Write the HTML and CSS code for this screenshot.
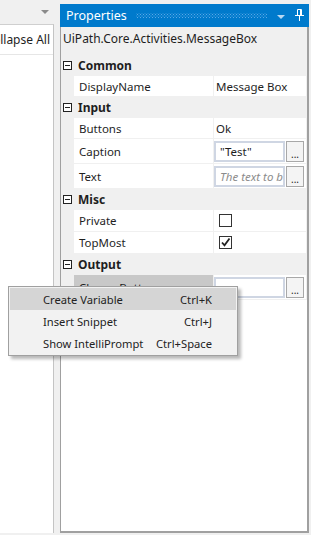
FILE: index.html
```html
<!DOCTYPE html>
<html lang="en">
<head>
  <meta charset="UTF-8" />
  <meta name="viewport" content="width=device-width, initial-scale=1.0"/>
  <title>Properties</title>
  <link rel="stylesheet" href="styles.css">
</head>
<body>
  <div class="workspace">
    <!-- left pane, mostly cut off -->
    <div class="side">
      <div class="side-head">
        <span class="side-arrow"></span>
      </div>
      <div class="side-body">
        <div class="side-tool"><span>Collapse All</span></div>
      </div>
    </div>

    <!-- properties pane -->
    <div class="props">
      <div class="props-title">
        <span class="title-text">Properties</span>
        <span class="title-grip"></span>
        <span class="title-arrow"></span>
        <svg class="title-pin" width="9" height="12" viewBox="0 0 9 12">
          <path d="M2.5 0.5h4v6h-4z M0 6.5h9 M4.5 7v5" fill="none" stroke="#fff" stroke-width="1"/>
          <path d="M5 1v5.5h1.5V1z" fill="#fff"/>
        </svg>
      </div>
      <div class="props-body">
        <div class="props-type">UiPath.Core.Activities.MessageBox</div>
        <div class="grid">
          <div class="cat"><span class="toggle"></span><span class="cat-name">Common</span></div>
          <div class="row">
            <span class="name">DisplayName</span>
            <span class="value">Message Box</span>
          </div>

          <div class="cat"><span class="toggle"></span><span class="cat-name">Input</span></div>
          <div class="row">
            <span class="name">Buttons</span>
            <span class="value">Ok</span>
          </div>
          <div class="row tall">
            <span class="name">Caption</span>
            <span class="value edit"><span class="box">"Test"</span><span class="dots">...</span></span>
          </div>
          <div class="row tall">
            <span class="name">Text</span>
            <span class="value edit"><span class="box hint">The text to be displayed</span><span class="dots">...</span></span>
          </div>

          <div class="cat"><span class="toggle"></span><span class="cat-name">Misc</span></div>
          <div class="row mid">
            <span class="name">Private</span>
            <span class="value"><span class="check"></span></span>
          </div>
          <div class="row mid">
            <span class="name">TopMost</span>
            <span class="value">
              <span class="check">
                <svg width="11" height="11" viewBox="0 0 11 11"><path d="M2 5.5l2.5 2.8L9.5 1.5" fill="none" stroke="#222" stroke-width="1.8"/></svg>
              </span>
            </span>
          </div>

          <div class="cat"><span class="toggle"></span><span class="cat-name">Output</span></div>
          <div class="row tall">
            <span class="name picked">ChooseButton</span>
            <span class="value edit"><span class="box"></span><span class="dots">...</span></span>
          </div>
        </div>
      </div>
    </div>
  </div>
  <div class="bottom-strip"></div>

  <!-- context menu over the grid -->
  <div class="menu">
    <div class="menu-item active"><span>Create Variable</span><span>Ctrl+K</span></div>
    <div class="menu-item"><span>Insert Snippet</span><span>Ctrl+J</span></div>
    <div class="menu-item"><span>Show IntelliPrompt</span><span>Ctrl+Space</span></div>
  </div>
</body>
</html>
```

FILE: styles.css
```css
:root {
  --bg: #f0f0f0;
  --blue: #007acc;
  --line: #a0a0a0;
  --text: #1e1e1e;
}
html, body {
  margin: 0; padding: 0;
  background: var(--bg);
  color: var(--text);
  font-family: 'Noto Sans', 'Open Sans', Arial, sans-serif;
  font-size: 11.5px;
  height: 535px;
  overflow: hidden;
}
.workspace {
  display: flex;
  height: 533px;
}

/* left pane */
.side {
  width: 54px;
  display: flex;
  flex-direction: column;
}
.side-head {
  height: 24px;
  display: flex;
  justify-content: flex-end;
  align-items: center;
  padding-right: 5px;
}
.side-arrow {
  width: 0; height: 0;
  border-left: 4px solid transparent;
  border-right: 4px solid transparent;
  border-top: 4px solid #8a8a8a;
}
.side-body {
  flex: 1;
  background: #fff;
  border-top: 1px solid #cfcfcf;
  border-right: 1px solid #c4c4c4;
}
.side-tool {
  height: 29px;
  border-bottom: 1px solid #e6e6e6;
  display: flex;
  justify-content: flex-end;
  align-items: center;
  overflow: hidden;
  padding-right: 3px;
  white-space: nowrap;
  font-size: 12px;
}

/* properties pane */
.props {
  margin-left: 6px;
  width: 249px;
  display: flex;
  flex-direction: column;
  padding-top: 4px;
}
.props-title {
  height: 23px;
  background: var(--blue);
  color: #fff;
  display: flex;
  align-items: center;
  padding: 0 5px 0 6px;
  gap: 6px;
}
.title-text { font-size: 12.5px; }
.title-grip {
  flex: 1;
  height: 5px;
  margin: 0 4px 0 3px;
  background-image:
    radial-gradient(circle, #5aa8e6 0.7px, transparent 0.8px),
    radial-gradient(circle, #5aa8e6 0.7px, transparent 0.8px);
  background-size: 3px 3px;
  background-position: 0 0, 1.5px 1.5px;
}
.title-arrow {
  width: 0; height: 0;
  border-left: 4px solid transparent;
  border-right: 4px solid transparent;
  border-top: 4px solid #b8d8f2;
  margin: 2px 4px 0 0;
}
.title-pin { margin-bottom: 1px; }
.props-body {
  flex: 1;
  background: #fff;
  border-left: 1px solid var(--line);
  border-right: 2px solid var(--line);
  border-bottom: 2px solid var(--line);
  display: flex;
  flex-direction: column;
}
.props-type {
  background: var(--bg);
  height: 28px;
  line-height: 24px;
  padding-left: 2px;
  font-size: 12px;
}
.grid {
  display: flex;
  flex-direction: column;
  background: var(--bg);
  gap: 1px;
  padding-bottom: 1px;
}
.cat {
  height: 20px;
  display: flex;
  align-items: center;
  font-weight: bold;
  font-size: 12px;
}
.toggle {
  width: 7px; height: 7px;
  border: 1px solid #222;
  margin: 0 6px 0 2px;
  position: relative;
  background: #fff;
}
.toggle::after {
  content: "";
  position: absolute;
  left: 1px; top: 3px;
  width: 5px; height: 1px;
  background: #222;
}
.row {
  height: 20px;
  display: grid;
  grid-template-columns: 139px 92px;
  column-gap: 1px;
  margin-left: 13px;
}
.row.mid { height: 21px; }
.row.tall { height: 24px; }
.name, .value {
  background: #fff;
  display: flex;
  align-items: center;
  white-space: nowrap;
  overflow: hidden;
}
.name { padding-left: 5px; }
.name.picked { background: #c8c8c8; }
.value { padding-left: 2px; }
.value.edit { padding: 2px 2px 1px 0; gap: 1px; align-items: stretch; }
.box {
  width: 67px;
  border: 2px solid #cfd6e3;
  padding: 0 0 0 4px;
  display: flex;
  align-items: center;
  overflow: hidden;
}
.box.hint { color: #8c8c8c; font-style: italic; }
.dots {
  width: 17px;
  border: 1px solid #a8a8a8;
  background: #f4f4f4;
  font-size: 10px;
  display: flex;
  justify-content: center;
  align-items: flex-end;
  line-height: 14px;
}
.check {
  width: 11px; height: 11px;
  border: 1px solid #333;
  margin-left: 3px;
  display: flex;
  align-items: center;
  justify-content: center;
}

.bottom-strip { height: 2px; }

/* context menu */
.menu {
  position: absolute;
  left: 8px; top: 286px;
  width: 228px;
  padding: 1px 0;
  background: #f2f2f2;
  border: 1px solid #a0a0a0;
  box-shadow: 3px 3px 3px rgba(0,0,0,0.28);
  font-size: 11.2px;
}
.menu-item {
  height: 22px;
  margin: 0 1px;
  display: flex;
  justify-content: space-between;
  align-items: center;
  padding: 0 24px 0 33px;
  color: #222;
}
.menu-item.active { background: #d5d5d5; }
```
